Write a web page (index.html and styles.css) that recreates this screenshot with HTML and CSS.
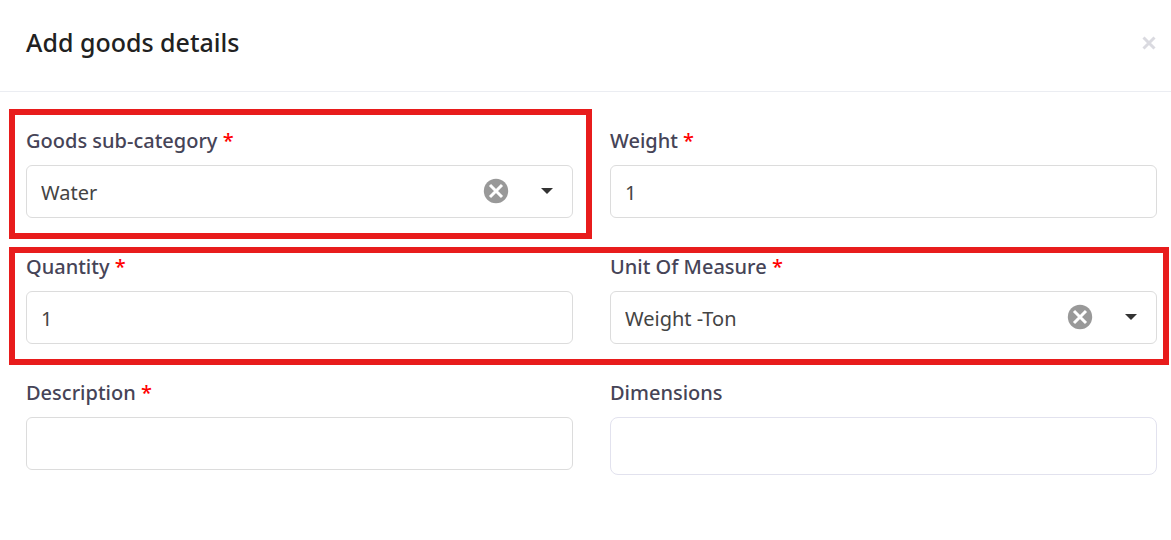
FILE: index.html
```html
<!DOCTYPE html>
<html lang="en">
<head>
    <meta charset="utf-8">
    <meta name="viewport" content="width=device-width, initial-scale=1.0">
    <title>Add goods details</title>
    <link rel="stylesheet" href="styles.css">
</head>

<body>
    <header class="modal-header">
        <h1>Add goods details</h1>
        <button type="button" class="close" aria-label="Close">
            <svg width="14" height="14" viewBox="0 0 14 14"><path d="M1.5 1.5l11 11M12.5 1.5l-11 11" /></svg>
        </button>
    </header>

    <form class="goods-form">
        <div class="row">
            <div class="field marked">
                <label for="sub-category">Goods sub-category <span class="required">*</span></label>
                <div class="select-box">
                    <select id="sub-category">
                        <option>Water</option>
                    </select>
                    <button type="button" class="clear" aria-label="Clear sub-category">
                        <svg width="26" height="26" viewBox="0 0 26 26"><circle cx="13" cy="13" r="12.2" /><path d="M7 7l12 12M19 7L7 19" /></svg>
                    </button>
                    <svg class="caret" width="12" height="6" viewBox="0 0 12 6"><path d="M0 0h12L6 6z" /></svg>
                </div>
            </div>
            <div class="field">
                <label for="weight">Weight <span class="required">*</span></label>
                <input type="text" id="weight" value="1">
            </div>
        </div>

        <div class="row marked">
            <div class="field">
                <label for="quantity">Quantity <span class="required">*</span></label>
                <input type="text" id="quantity" value="1">
            </div>
            <div class="field">
                <label for="unit">Unit Of Measure <span class="required">*</span></label>
                <div class="select-box">
                    <select id="unit">
                        <option>Weight -Ton</option>
                    </select>
                    <button type="button" class="clear" aria-label="Clear unit of measure">
                        <svg width="26" height="26" viewBox="0 0 26 26"><circle cx="13" cy="13" r="12.2" /><path d="M7 7l12 12M19 7L7 19" /></svg>
                    </button>
                    <svg class="caret" width="12" height="6" viewBox="0 0 12 6"><path d="M0 0h12L6 6z" /></svg>
                </div>
            </div>
        </div>

        <div class="row">
            <div class="field">
                <label for="description">Description <span class="required">*</span></label>
                <input type="text" id="description">
            </div>
            <div class="field">
                <label for="dimensions">Dimensions</label>
                <input type="text" id="dimensions" class="large">
            </div>
        </div>
    </form>
</body>
</html>
```

FILE: styles.css
```css
* {
    box-sizing: border-box;
}

body {
    margin: 0;
    background-color: #fff;
    font-family: "Noto Sans", "Open Sans", sans-serif;
}

.modal-header {
    display: flex;
    align-items: center;
    justify-content: space-between;
    padding: 24px 14px 30px 26px;
    border-bottom: 1px solid #ebedf2;
}

h1 {
    margin: 0;
    font-size: 25px;
    line-height: 37px;
    font-weight: 500;
    color: #212121;
}

button {
    display: flex;
    padding: 0;
    border: 0;
    background: none;
    cursor: pointer;
}

.close svg {
    margin: 1px;
    fill: none;
    stroke: #dadae0;
    stroke-width: 3;
}

.goods-form {
    display: grid;
    gap: 35px;
    padding: 35px 14px 35px 26px;
}

.row {
    display: grid;
    grid-template-columns: 1fr 1fr;
    gap: 37px;
    align-items: start;
}

.field {
    display: grid;
    gap: 10px;
}

label {
    font-size: 20px;
    line-height: 28px;
    font-weight: 500;
    color: #464457;
}

.required {
    color: #f00;
}

input,
select {
    width: 100%;
    height: 53px;
    padding: 2px 14px 0;
    border: 1px solid #dcdcdc;
    border-radius: 6px;
    background-color: #fff;
    font-family: "Noto Sans", sans-serif;
    font-size: 20px;
    color: #444;
    appearance: none;
}

.large {
    height: 58px;
    border-color: #e2e2ee;
    border-radius: 8px;
}

.select-box {
    position: relative;
}

.clear {
    position: absolute;
    top: 13px;
    right: 64px;
}

.clear circle {
    fill: #999;
}

.clear path {
    fill: none;
    stroke: #fff;
    stroke-width: 3;
}

.caret {
    position: absolute;
    top: 23px;
    right: 20px;
    fill: #333;
    pointer-events: none;
}

/* red frame round the fields to look at */
.marked {
    position: relative;
}

.marked::after {
    content: "";
    position: absolute;
    inset: -18px -19px -21px -17px;
    border: 6px solid #e81c1c;
    pointer-events: none;
}

.row.marked::after {
    top: -6px;
    right: -12px;
}
```
